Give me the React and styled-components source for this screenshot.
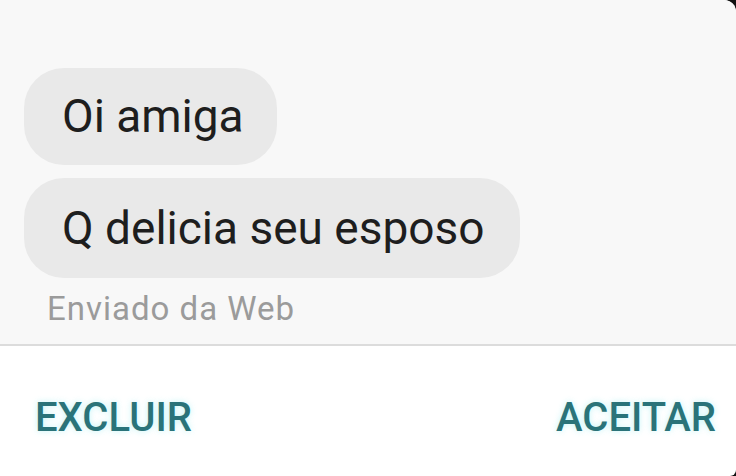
import React from "react";
import styled, { createGlobalStyle } from "styled-components";

const Global = createGlobalStyle`
  html, body {
    margin: 0;
    padding: 0;
    background: #111;
  }
  body {
    font-family: Roboto, "Liberation Sans", sans-serif;
  }
`;

const Dialog = styled.div`
  width: 736px;
  height: 476px;
  display: flex;
  flex-direction: column;
  background: #fff;
  border-top-right-radius: 12px;
  border-bottom-right-radius: 6px;
  overflow: hidden;
`;

const Thread = styled.div`
  height: 346px;
  box-sizing: border-box;
  background: #f8f8f8;
  padding: 68px 0 0 24px;
  display: flex;
  flex-direction: column;
  align-items: flex-start;
  gap: 13px;
  border-bottom: 2px solid #dcdcdc;
`;

const Bubble = styled.div`
  background: #e9e9e9;
  color: #1e1e1e;
  font-size: 46px;
  line-height: 52px;
  padding: ${(p) => (p.$tall ? "24px 35px 24px 38px" : "22px 33px 23px 38px")};
  border-radius: 40px;
`;

const Meta = styled.div`
  margin: -1px 0 0 23px;
  font-size: 33px;
  line-height: 38px;
  letter-spacing: 1px;
  color: #9b9b9b;
`;

const Actions = styled.div`
  flex: 1;
  display: flex;
  justify-content: space-between;
  align-items: center;
  padding: 12px 20px 0 35px;
`;

const Action = styled.button`
  border: none;
  background: none;
  padding: 0;
  font-family: inherit;
  font-size: 40px;
  font-weight: 500;
  color: #2a7379;
  text-shadow: 0 0 6px rgba(120, 230, 235, 0.45);
`;

export default function App() {
  return (
    <>
      <Global />
      <Dialog>
        <Thread>
          <Bubble>Oi amiga</Bubble>
          <Bubble $tall>Q delicia seu esposo</Bubble>
          <Meta>Enviado da Web</Meta>
        </Thread>
        <Actions>
          <Action>EXCLUIR</Action>
          <Action>ACEITAR</Action>
        </Actions>
      </Dialog>
    </>
  );
}
